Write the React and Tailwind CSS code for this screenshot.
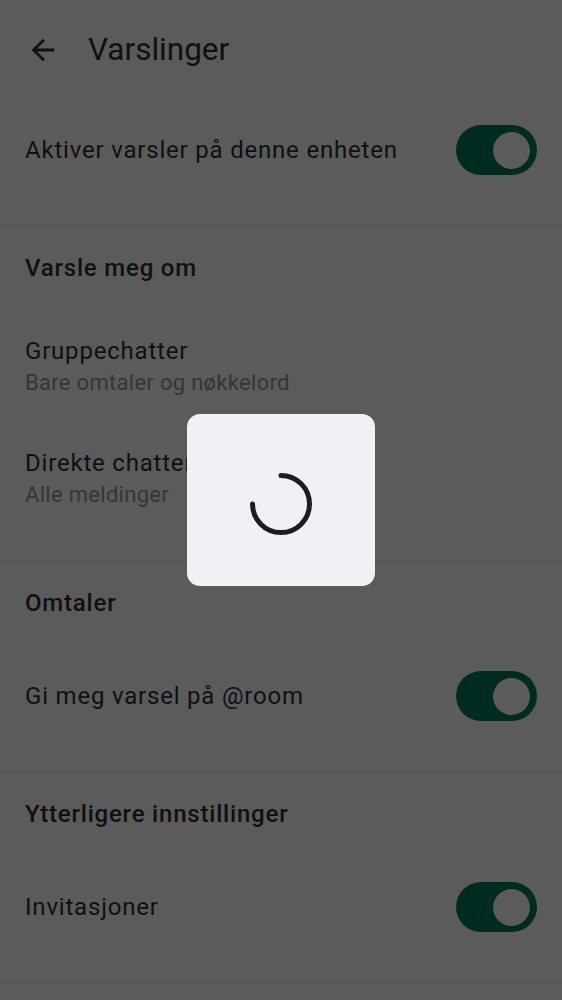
import React from 'react'

const font = { fontFamily: 'Roboto, "Noto Sans", sans-serif' }

function Toggle() {
  return (
    <span className="flex h-[50px] w-[81px] shrink-0 items-center justify-end rounded-full bg-[#002b21] pr-[7px]">
      <span className="h-[37px] w-[37px] rounded-full bg-[#5b5b5b]" />
    </span>
  )
}

function SectionTitle({ children }) {
  return (
    <div className="px-[25px] pb-[27px] pt-[26px]">
      <p className="text-[24px] font-medium leading-[32px] tracking-[0.8px] text-[#0f1011]">{children}</p>
    </div>
  )
}

function ToggleRow({ label }) {
  return (
    <div className="flex h-[100px] items-center justify-between px-[25px]">
      <p className="text-[24px] leading-[32px] tracking-[0.8px] text-[#0f1011]">{label}</p>
      <Toggle />
    </div>
  )
}

function ChoiceRow({ label, value }) {
  return (
    <div className="px-[25px] py-[24px]">
      <p className="text-[24px] leading-[32px] tracking-[0.8px] text-[#0f1011]">{label}</p>
      <p className="text-[22px] leading-[32px] tracking-[0.3px] text-[#33363a]">{value}</p>
    </div>
  )
}

const Divider = () => <div className="h-px bg-[#535353]" />

export default function App() {
  return (
    <div className="min-h-screen bg-[#5b5b5b]" style={font}>
      <header className="flex h-[100px] items-center">
        <button className="ml-[26px] flex h-[34px] w-[34px] items-center justify-center text-[#0f1011]">
          <svg viewBox="0 0 24 24" width="34" height="34" fill="currentColor">
            <path d="M20 11H7.83l5.59-5.59L12 4l-8 8 8 8 1.41-1.41L7.83 13H20v-2z" />
          </svg>
        </button>
        <h1 className="ml-[28px] text-[31.5px] leading-[36px] text-[#0f1011]">Varslinger</h1>
      </header>

      <div className="pb-[25px]">
        <ToggleRow label="Aktiver varsler på denne enheten" />
      </div>
      <Divider />

      <SectionTitle>Varsle meg om</SectionTitle>
      <ChoiceRow label="Gruppechatter" value="Bare omtaler og nøkkelord" />
      <ChoiceRow label="Direkte chatter" value="Alle meldinger" />
      <div className="h-[26px]" />
      <Divider />

      <div className="-mt-px">
        <SectionTitle>Omtaler</SectionTitle>
      </div>
      <div className="pb-[25px]">
        <ToggleRow label="Gi meg varsel på @room" />
      </div>
      <Divider />

      <SectionTitle>Ytterligere innstillinger</SectionTitle>
      <div className="pb-[25px]">
        <ToggleRow label="Invitasjoner" />
      </div>
      <Divider />

      <div className="fixed inset-0 flex items-center justify-center">
        <div className="flex h-[172px] w-[188px] items-center justify-center rounded-[13px] bg-[#f0f1f5]">
          <svg className="mt-[8px]" width="64" height="64" viewBox="0 0 64 64" fill="none">
            <path
              d="M 32 3.5 A 28.5 28.5 0 1 1 3.5 32"
              stroke="#1b1d22"
              strokeWidth="5"
              strokeLinecap="round"
            />
          </svg>
        </div>
      </div>
    </div>
  )
}
